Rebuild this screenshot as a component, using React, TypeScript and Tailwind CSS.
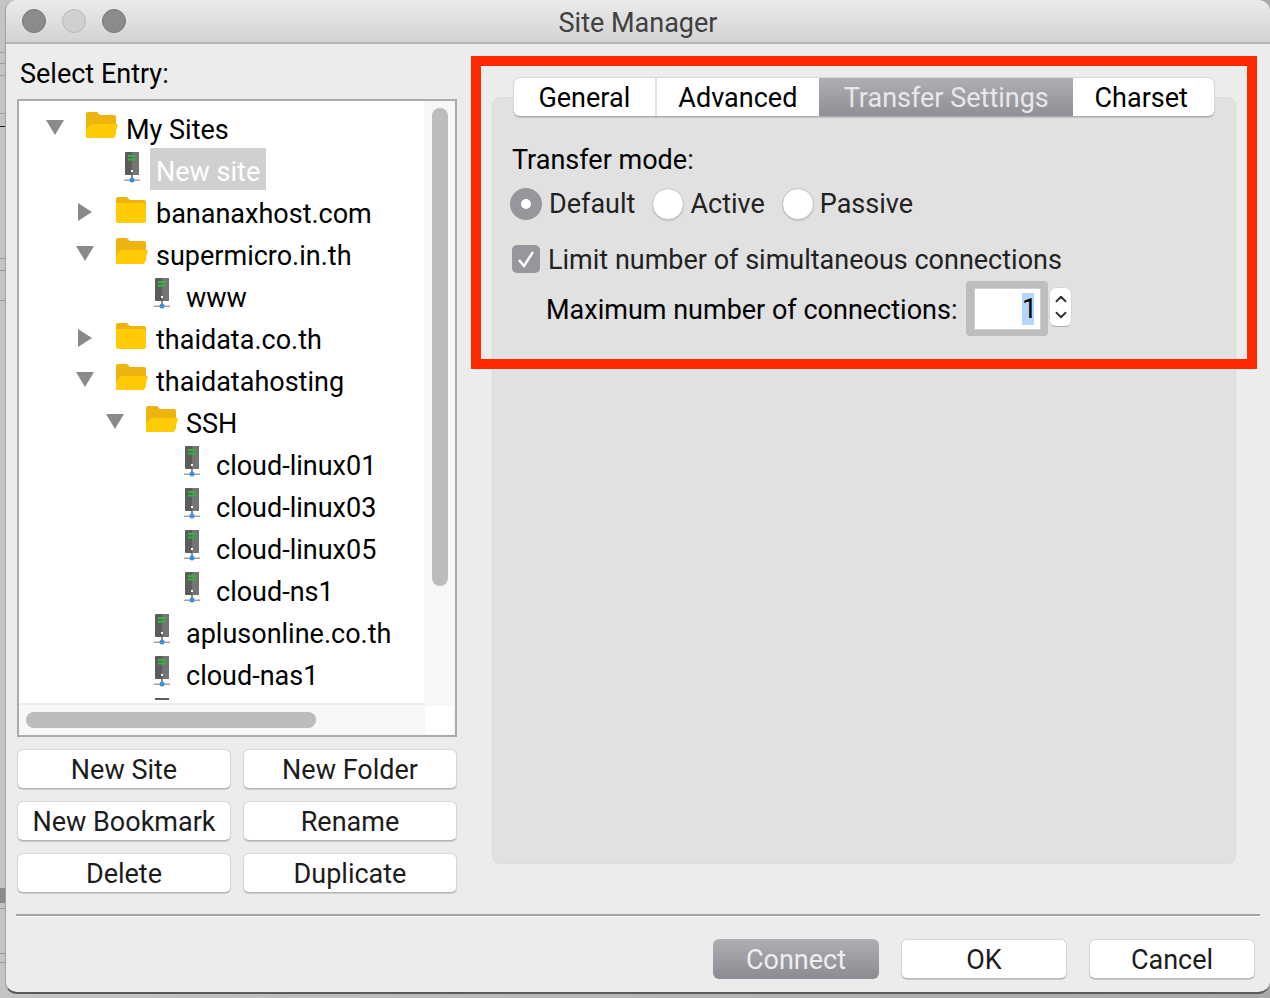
import { ChevronDown, ChevronUp } from "lucide-react";

type Row = {
  label: string;
  indent: string;
  kind: "open" | "closed" | "server" | "clipped";
  arrow?: "down" | "right";
  selected?: boolean;
};

const rows: Row[] = [
  { label: "My Sites", indent: "pl-[26px]", kind: "open", arrow: "down" },
  { label: "New site", indent: "pl-[56px]", kind: "server", selected: true },
  { label: "bananaxhost.com", indent: "pl-[56px]", kind: "closed", arrow: "right" },
  { label: "supermicro.in.th", indent: "pl-[56px]", kind: "open", arrow: "down" },
  { label: "www", indent: "pl-[86px]", kind: "server" },
  { label: "thaidata.co.th", indent: "pl-[56px]", kind: "closed", arrow: "right" },
  { label: "thaidatahosting", indent: "pl-[56px]", kind: "open", arrow: "down" },
  { label: "SSH", indent: "pl-[86px]", kind: "open", arrow: "down" },
  { label: "cloud-linux01", indent: "pl-[116px]", kind: "server" },
  { label: "cloud-linux03", indent: "pl-[116px]", kind: "server" },
  { label: "cloud-linux05", indent: "pl-[116px]", kind: "server" },
  { label: "cloud-ns1", indent: "pl-[116px]", kind: "server" },
  { label: "aplusonline.co.th", indent: "pl-[86px]", kind: "server" },
  { label: "cloud-nas1", indent: "pl-[86px]", kind: "server" },
  { label: "", indent: "pl-[86px]", kind: "clipped" },
];

function Arrow({ dir }: { dir?: "down" | "right" }) {
  return (
    <span className="w-[41px] shrink-0 flex -mt-[2px]">
      {dir === "down" && (
        <svg width="20" height="16" viewBox="0 0 20 16">
          <path d="M1 0h18l-9 15z" fill="#8a8a8a" />
        </svg>
      )}
      {dir === "right" && (
        <svg width="16" height="20" viewBox="0 0 16 20" className="ml-[2px]">
          <path d="M1 1v18l14-9z" fill="#8a8a8a" />
        </svg>
      )}
    </span>
  );
}

function FolderOpen() {
  return (
    <svg width="32" height="28" viewBox="0 0 32 28" className="-mt-[8px]">
      <path d="M0 3a2 2 0 0 1 2-2h9l3 3h14a2 2 0 0 1 2 2v18H0z" fill="#eeb30f" />
      <path d="M6 13h26l-3 12a2 2 0 0 1-2 2H1a1 1 0 0 1-1-1v-7l4-5z" fill="#ffcb05" />
    </svg>
  );
}

function FolderClosed() {
  return (
    <svg width="30" height="28" viewBox="0 0 30 28" className="-mt-[6px] mr-[2px]">
      <path d="M0 3a2 2 0 0 1 2-2h9l3 3h14a2 2 0 0 1 2 2v4H0z" fill="#eeb30f" />
      <path d="M0 7h28a2 2 0 0 1 2 2v16a2 2 0 0 1-2 2H2a2 2 0 0 1-2-2z" fill="#ffcb05" />
    </svg>
  );
}

function ServerIcon() {
  return (
    <svg width="32" height="32" viewBox="0 0 32 32" className="-mt-[6px]">
      <rect x="9" y="0" width="14" height="23" rx="1" fill="#5c5c5c" />
      <rect x="16" y="0" width="7" height="23" rx="1" fill="#747474" />
      <rect x="12" y="3" width="8" height="2" fill="#33b43a" />
      <rect x="12" y="6.5" width="8" height="2" fill="#33b43a" />
      <rect x="15" y="18" width="2" height="2" fill="#ffffff" />
      <rect x="15" y="23" width="2" height="5" fill="#8a8a8a" />
      <rect x="8" y="27.5" width="16" height="1.5" fill="#a3a3a3" />
      <circle cx="16" cy="28" r="2.5" fill="#3f8fd8" />
    </svg>
  );
}

// the next server down, cut off by the list so only its top edge shows
function ClippedServer() {
  return (
    <svg width="32" height="32" viewBox="0 0 32 32" className="-mt-[6px]">
      <rect x="9" y="0" width="14" height="2" fill="#5c5c5c" />
    </svg>
  );
}

function TreeRow({ row }: { row: Row }) {
  return (
    <div className={`h-[42px] pt-[4px] shrink-0 flex items-center ${row.indent}`}>
      <Arrow dir={row.arrow} />
      <span className="w-[32px] shrink-0 flex justify-center">
        {row.kind === "open" && <FolderOpen />}
        {row.kind === "closed" && <FolderClosed />}
        {row.kind === "server" && <ServerIcon />}
        {row.kind === "clipped" && <ClippedServer />}
      </span>
      {row.label && (
        <span
          className={
            row.selected
              ? "ml-[2px] px-[6px] -mt-[4px] h-[42px] leading-[48px] bg-[#d0d0d0] text-white"
              : "ml-[2px] px-[6px] pt-[2px] leading-[46px] text-black"
          }
        >
          {row.label}
        </span>
      )}
    </div>
  );
}

function Btn({ label, className }: { label: string; className: string }) {
  return (
    <button
      className={`h-[40px] pt-[3px] bg-white rounded-[6px] border border-[#d6d6d6] border-b-[#b5b5b5] text-[#1c1c1c] shadow-[0_1px_1px_rgba(0,0,0,0.15)] ${className}`}
    >
      {label}
    </button>
  );
}

function Tab({ label, className }: { label: string; className: string }) {
  return <div className={`h-full pt-[2px] flex items-center justify-center ${className}`}>{label}</div>;
}

function Radio({ label, gap, checked }: { label: string; gap: string; checked?: boolean }) {
  return (
    <div className={`flex items-center mr-[17px] ${gap}`}>
      {checked ? (
        <span className="w-[32px] h-[32px] rounded-full bg-[#96969c] flex items-center justify-center">
          <span className="w-[10px] h-[10px] rounded-full bg-white" />
        </span>
      ) : (
        <span className="w-[32px] h-[32px] rounded-full bg-white border border-[#c4c4c4] shadow-[0_1px_1px_rgba(0,0,0,0.15)]" />
      )}
      <span className="text-[#222222]">{label}</span>
    </div>
  );
}

export default function App() {
  return (
    <div
      className="relative w-[1270px] h-[998px] overflow-hidden bg-gradient-to-r from-[#c4c4c4] to-[#a8a8a8] text-[27px] leading-none"
      style={{ fontFamily: "Roboto, 'Liberation Sans', sans-serif" }}
    >
      {/* bits of the window behind, seen down the left edge */}
      <div className="absolute left-0 top-[52px] w-[5px] h-[1px] bg-[#a0a0a0]" />
      <div className="absolute left-0 top-[63px] w-[5px] h-[1px] bg-[#a0a0a0]" />
      <div className="absolute left-0 top-[75px] w-[5px] h-[1px] bg-[#a0a0a0]" />
      <div className="absolute left-0 top-[113px] w-[5px] h-[1px] bg-[#a0a0a0]" />
      <div className="absolute left-0 top-[126px] w-[5px] h-[1px] bg-[#222222]" />
      <div className="absolute left-0 top-[258px] w-[5px] h-[1px] bg-[#9a9a9a]" />
      <div className="absolute left-0 top-[270px] w-[5px] h-[1px] bg-[#9a9a9a]" />
      <div className="absolute left-0 top-[300px] w-[5px] h-[1px] bg-[#9a9a9a]" />
      <div className="absolute left-0 top-[888px] w-[5px] h-[15px] bg-[#8c8c90]" />
      <div className="absolute left-0 top-[908px] w-[5px] h-[1px] bg-[#9a9a9a]" />
      <div className="absolute left-0 top-[953px] w-[5px] h-[1px] bg-[#9a9a9a]" />
      <div className="absolute left-0 top-[962px] w-[5px] h-[1px] bg-[#9a9a9a]" />

      <div className="relative ml-[5px] w-[1265px] h-[994px] flex flex-col bg-[#ececec] rounded-[12px] overflow-hidden border-b-[2px] border-b-[#5a5a5a] border-l border-l-[#a0a0a0]">
        {/* title bar */}
        <div className="h-[44px] shrink-0 flex items-center bg-gradient-to-b from-[#ebebeb] to-[#d4d3d4] border-b-[2px] border-[#b4b4b4]">
          <div className="flex gap-[16px] pl-[16px]">
            <span className="w-[24px] h-[24px] rounded-full bg-[#8b8b8d] border border-[#77777a]" />
            <span className="w-[24px] h-[24px] rounded-full bg-[#d0d0d0] border border-[#b9b9b9]" />
            <span className="w-[24px] h-[24px] rounded-full bg-[#8b8b8d] border border-[#77777a]" />
          </div>
          <div className="flex-1 pt-[4px] text-center text-[#404040] pr-[120px]">Site Manager</div>
        </div>

        <div className="flex flex-1 min-h-0">
          {/* left column */}
          <div className="w-[440px] ml-[11px] shrink-0 flex flex-col">
            <div className="h-[55px] pl-[3px] pt-[17px] text-black">Select Entry:</div>
            <div className="h-[638px] shrink-0 border-2 border-[#ababab] bg-[#f7f7f7] flex flex-col">
              <div className="h-[604px] flex">
                <div className="w-[405px] pt-[5px] bg-white overflow-hidden flex flex-col border-b-2 border-[#ededed]">
                  {rows.map((row, i) => (
                    <TreeRow key={i} row={row} />
                  ))}
                </div>
                <div className="flex-1 flex justify-center pt-[7px] pr-[1px]">
                  <div className="w-[16px] h-[478px] ml-[2px] rounded-full bg-[#bcbcbc]" />
                </div>
              </div>
              <div className="flex-1 flex items-center">
                <div className="w-[290px] h-[16px] ml-[7px] rounded-full bg-[#bcbcbc]" />
                <div className="ml-auto mr-[2px] w-[28px] h-[28px] bg-white" />
              </div>
            </div>
            <div className="grid grid-cols-2 gap-x-[12px] gap-y-[12px] mt-[12px]">
              <Btn label="New Site" className="w-full" />
              <Btn label="New Folder" className="w-full" />
              <Btn label="New Bookmark" className="w-full" />
              <Btn label="Rename" className="w-full" />
              <Btn label="Delete" className="w-full" />
              <Btn label="Duplicate" className="w-full" />
            </div>
          </div>

          {/* right column */}
          <div className="ml-[35px] mt-[53px] w-[744px] h-[767px] shrink-0 bg-[#e1e1e1] rounded-[8px] border border-[#dcdcdc] px-[20px]">
            <div className="-mt-[21px] w-[702px] h-[40px] flex bg-white rounded-[7px] border border-[#d6d6d6] border-b-[#adadad] shadow-[0_1px_1px_rgba(0,0,0,0.15)] overflow-hidden text-black">
              <Tab label="General" className="w-[143px] border-r-2 border-[#e4e4e4]" />
              <Tab label="Advanced" className="w-[163px]" />
              <Tab label="Transfer Settings" className="w-[255px] bg-gradient-to-b from-[#aeaeb3] to-[#8f8f95] text-[#e8e8ea]" />
              <Tab label="Charset" className="w-[141px] pr-[5px]" />
            </div>
            <div className="mt-[30px] -ml-[1px] text-black">Transfer mode:</div>
            <div className="flex mt-[14px] -ml-[3px]">
              <Radio label="Default" gap="gap-[7px]" checked />
              <Radio label="Active" gap="gap-[6px]" />
              <Radio label="Passive" gap="gap-[6px]" />
            </div>
            <div className="flex items-center gap-[8px] mt-[27px] -ml-[1px]">
              <span className="w-[28px] h-[28px] -mt-[4px] rounded-[5px] bg-[#96969c] flex items-center justify-center">
                <svg width="20" height="20" viewBox="0 0 20 20">
                  <path d="M3 11l5 6 9-14" fill="none" stroke="#fff" strokeWidth="2.5" />
                </svg>
              </span>
              <span className="text-[#222222]">Limit number of simultaneous connections</span>
            </div>
            <div className="flex items-center mt-[7px] ml-[33px]">
              <span className="pt-[4px] text-black">Maximum number of connections:</span>
              <span className="ml-[9px] w-[82px] h-[55px] rounded-[4px] bg-[#bdbdbd] flex items-center justify-center">
                <span className="w-[67px] h-[42px] bg-white border border-[#d0d0d0] flex items-center justify-end pr-[6px]">
                  <span className="w-[12px] text-center bg-[#b3d7ff] text-black leading-[32px]">1</span>
                </span>
              </span>
              <span className="ml-[1px] -mt-[4px] w-[23px] h-[40px] bg-white rounded-[7px] border border-[#d6d6d6] border-b-[#adadad] flex flex-col items-center justify-center text-[#333333]">
                <ChevronUp size={18} strokeWidth={2.5} className="-mb-[1px]" />
                <ChevronDown size={18} strokeWidth={2.5} className="-mt-[1px]" />
              </span>
            </div>
          </div>
        </div>

        {/* bottom bar */}
        <div className="h-[78px] shrink-0 mx-[10px] border-t-[2px] border-[#a3a3a3] shadow-[inset_0_1px_0_#ffffff] flex items-start justify-end gap-[22px] pt-[23px] pr-[5px]">
          <button className="w-[166px] h-[40px] pt-[3px] rounded-[6px] bg-gradient-to-b from-[#aeaeb3] to-[#8b8b91] text-[#eeeeee]">Connect</button>
          <Btn label="OK" className="w-[166px]" />
          <Btn label="Cancel" className="w-[166px]" />
        </div>
      </div>

      {/* red annotation */}
      <div className="absolute left-[471px] top-[56px] w-[786px] h-[313px] border-[10px] border-[#ff2a00]" />
    </div>
  );
}
